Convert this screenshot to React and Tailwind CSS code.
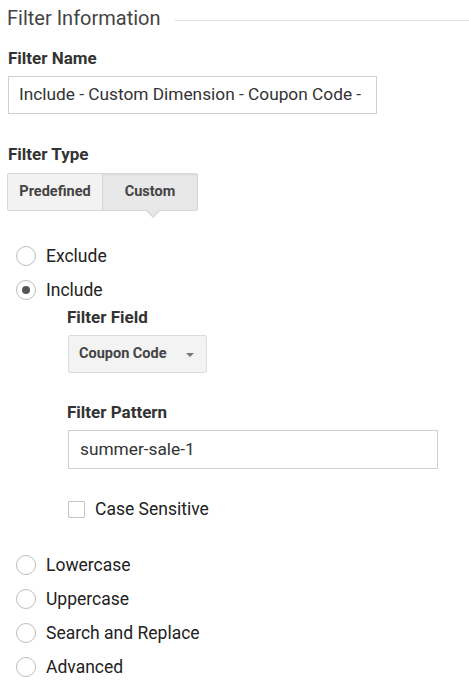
import React from "react";

function Radio({ label, checked }) {
    return (
        <div className="flex items-center h-[34px]">
            <span className="w-[20px] h-[20px] rounded-full border border-[#bdbdbd] bg-white flex items-center justify-center ml-[16px]">
                {checked && <span className="w-[8px] h-[8px] rounded-full bg-[#555]" />}
            </span>
            <span className="ml-[10px] text-[17.5px] leading-[22px] text-[#222]">{label}</span>
        </div>
    );
}

export default function App() {
    return (
        <div className="w-[469px] h-[686px] bg-white overflow-hidden text-[#222]" style={{ fontFamily: "Roboto, 'Liberation Sans', sans-serif" }}>
            {/* Section title */}
            <div className="flex items-center pt-[5px] pl-[7px]">
                <span className="text-[20px] text-[#444] leading-[26px]">Filter Information</span>
                <div className="flex-1 h-px bg-[#ddd] ml-[14px] mt-[4px]" />
            </div>

            <div className="pl-[8px]">
                <div className="mt-[17px] text-[17px] font-bold text-[#333] leading-[20px]">Filter Name</div>
                <div className="mt-[8px] w-[369px] h-[38px] border border-[#d0d0d0] flex items-center pl-[10px] text-[17.3px] text-[#333]">
                    Include - Custom Dimension - Coupon Code -
                </div>

                <div className="mt-[30px] text-[17px] font-bold text-[#333] leading-[20px]">Filter Type</div>
                <div className="mt-[9px] ml-[-1px] flex w-[191px] h-[38px] border border-[#d8d8d8] rounded-[2px] text-[14.5px] font-bold text-[#444] relative">
                    <div className="w-[95px] flex items-center justify-center bg-[#f2f2f2] border-r border-[#d8d8d8]">Predefined</div>
                    <div className="flex-1 flex items-center justify-center bg-[#e8e8e8] shadow-[inset_0_1px_2px_rgba(0,0,0,0.08)]">Custom</div>
                    <div className="absolute left-[137px] top-[36px] w-0 h-0 border-l-[8px] border-r-[8px] border-t-[8px] border-l-transparent border-r-transparent border-t-[#d8d8d8]" />
                    <div className="absolute left-[138px] top-[35px] w-0 h-0 border-l-[7px] border-r-[7px] border-t-[7px] border-l-transparent border-r-transparent border-t-[#e8e8e8]" />
                </div>
            </div>

            <div className="mt-[28px]">
                <Radio label="Exclude" />
                <Radio label="Include" checked />
            </div>

            <div className="pl-[67px]">
                <div className="text-[17px] font-bold text-[#333] leading-[20px]">Filter Field</div>
                <div className="mt-[8px] ml-[1px] w-[139px] h-[38px] border border-[#dcdcdc] bg-[#f3f3f3] rounded-[2px] flex items-center pl-[10px] text-[14.5px] font-bold text-[#444]">
                    Coupon Code
                    <span className="ml-[19px] w-0 h-0 border-l-[4px] border-r-[4px] border-t-[4px] border-l-transparent border-r-transparent border-t-[#777] mt-[2px]" />
                </div>

                <div className="mt-[29px] text-[17px] font-bold text-[#333] leading-[20px]">Filter Pattern</div>
                <div className="mt-[8px] ml-[1px] w-[370px] h-[39px] border border-[#d0d0d0] flex items-center pl-[11px] text-[17.3px] text-[#333]">
                    summer-sale-1
                </div>

                <div className="mt-[30px] ml-[1px] flex items-center h-[20px]">
                    <span className="w-[17px] h-[17px] border border-[#c4c4c4] bg-white rounded-[1px]" />
                    <span className="ml-[10px] text-[17.5px] leading-[20px] text-[#222]">Case Sensitive</span>
                </div>
            </div>

            <div className="mt-[29px]">
                <Radio label="Lowercase" />
                <Radio label="Uppercase" />
                <Radio label="Search and Replace" />
                <Radio label="Advanced" />
            </div>
        </div>
    );
}
